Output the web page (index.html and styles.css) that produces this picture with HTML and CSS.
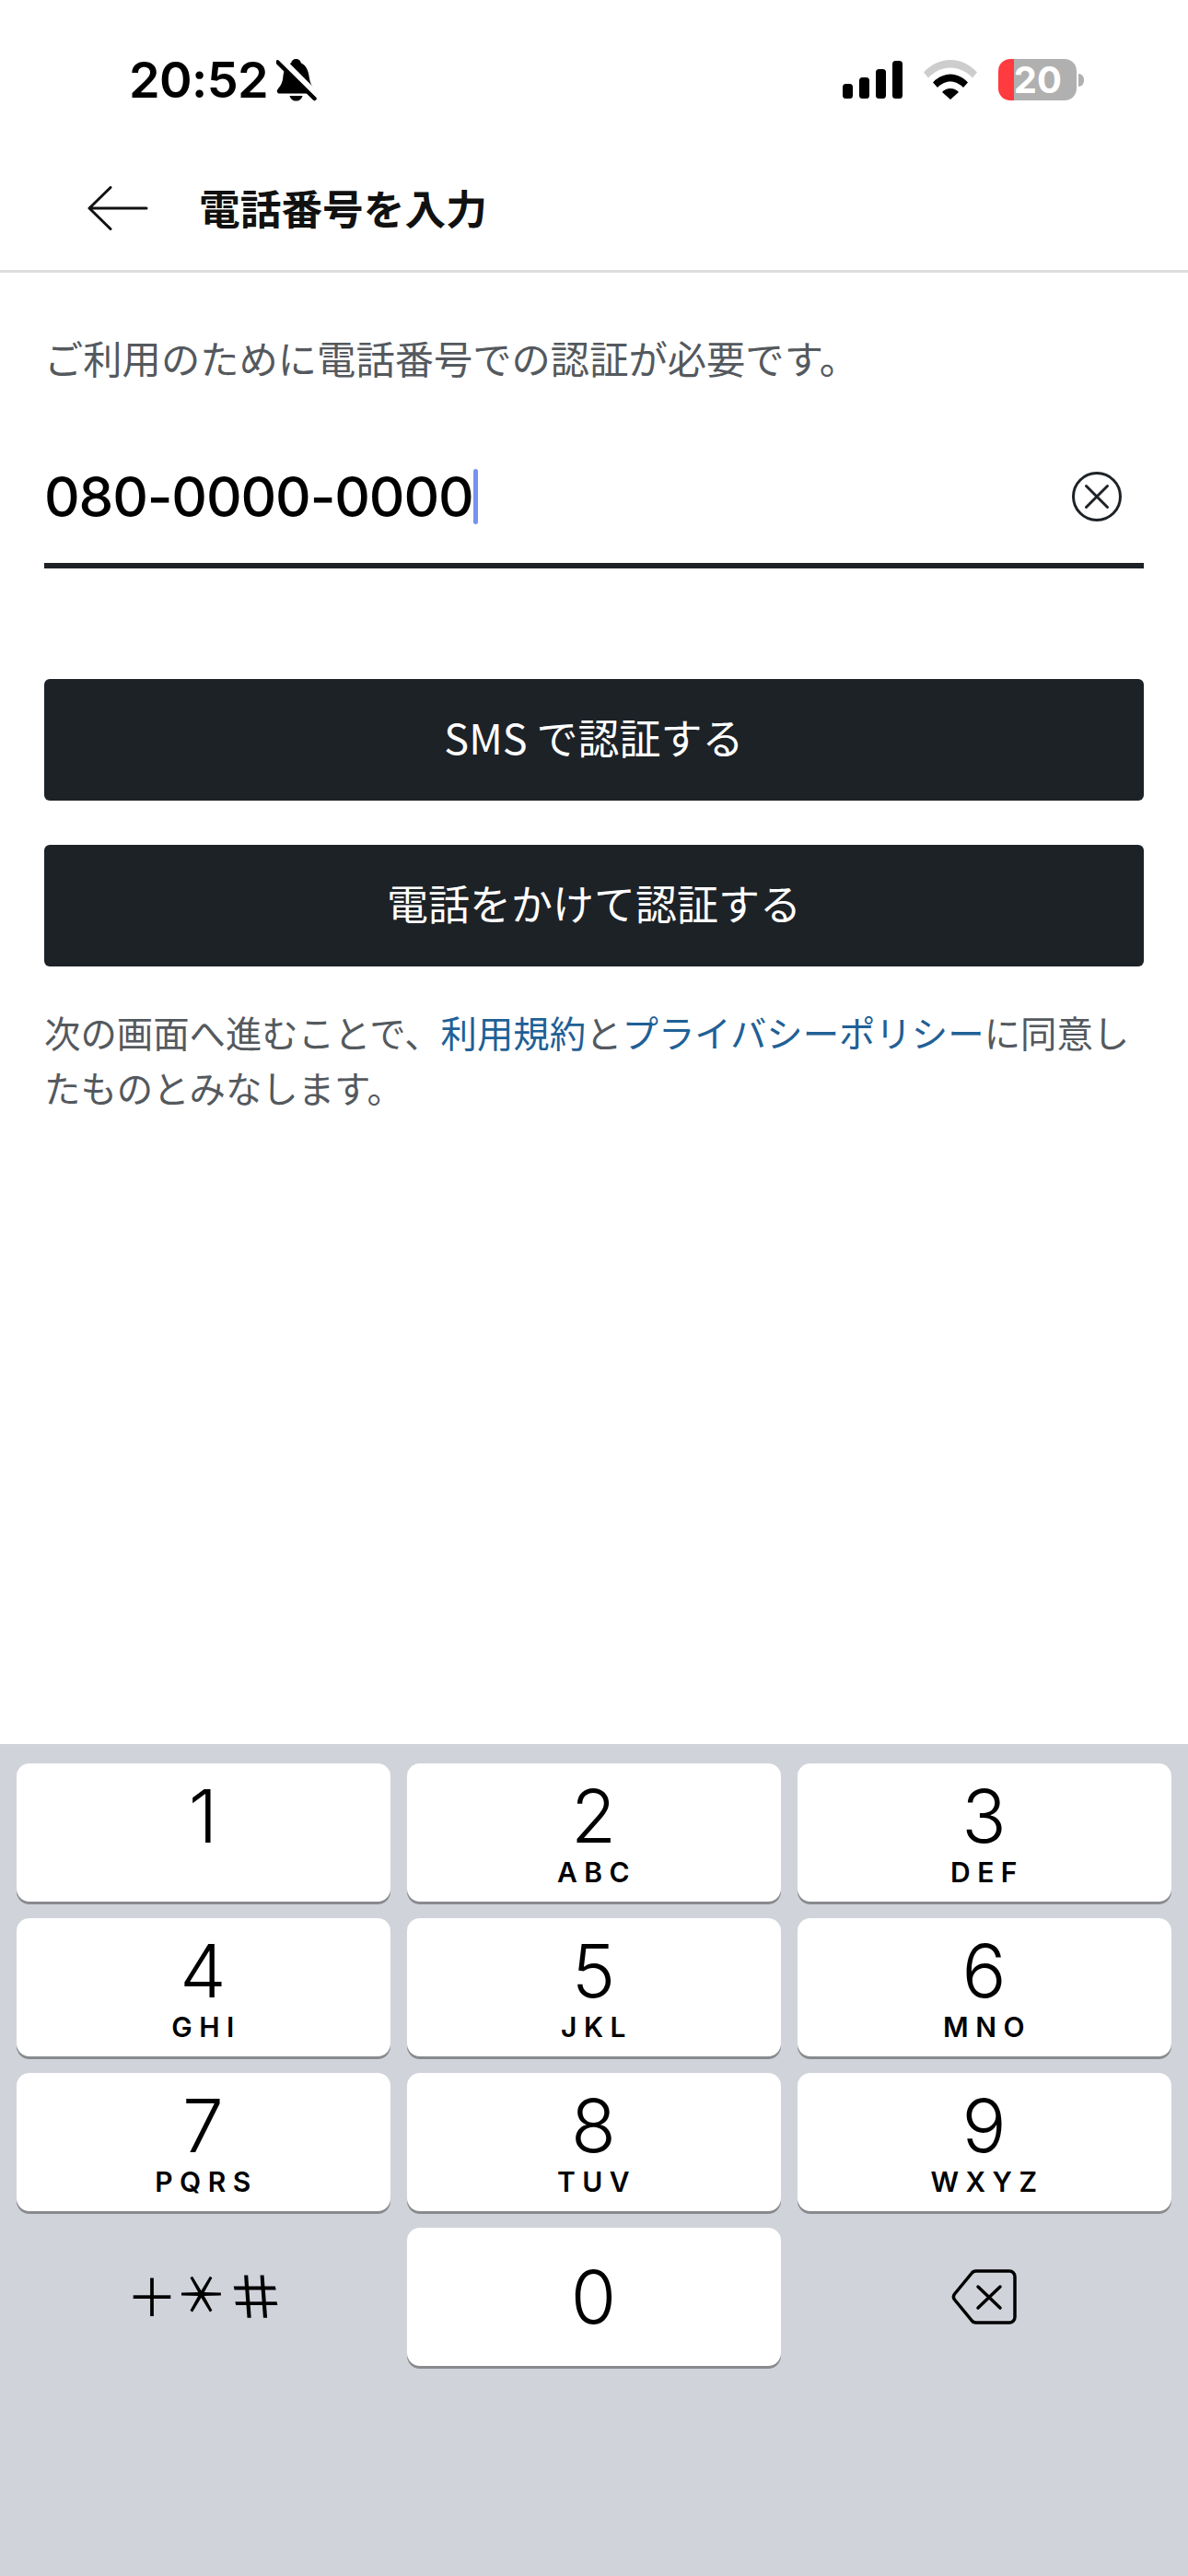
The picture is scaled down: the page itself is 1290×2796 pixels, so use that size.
FILE: index.html
```html
<!DOCTYPE html>
<html lang="ja">
<head>
<meta charset="utf-8">
<title>電話番号を入力</title>
<link rel="stylesheet" href="styles.css">
</head>
<body>
<div class="screen">
  <header class="status">
    <div class="status-left">
      <span class="time">20:52</span>
      <svg class="bell" width="46" height="46" viewBox="0 0 46 46">
        <path d="M21.500 0c-3 0-4.800 1.800-5.300 4.300C10 7 8 13 7.300 20 6.800 26 4 30 1.500 33c-1.500 2-.5 4.500 2 4.500h36c2.500 0 3.500-2.500 2-4.500-2.500-3-5-7-5.700-13C35 13 32.500 7 26.800 4.300 26.300 1.800 24.500 0 21.500 0z" fill="#000"/>
        <path d="M14.500 40h14c-.8 3.500-3.500 5.500-7 5.500s-6.200-2-7-5.500z" fill="#000"/>
        <path d="M3 -1l46 46" stroke="#fff" stroke-width="8"/>
        <path d="M1.500 3.500l40 39.500" stroke="#000" stroke-width="4.500" stroke-linecap="round"/>
      </svg>
    </div>
    <div class="status-right">
      <svg class="signal" width="65" height="41" viewBox="0 0 65 41">
        <rect x="0" y="25" width="11" height="16" rx="3.500"/>
        <rect x="18" y="18" width="11" height="23" rx="3.500"/>
        <rect x="36" y="9" width="11" height="32" rx="3.500"/>
        <rect x="54" y="0" width="11" height="41" rx="3.500"/>
      </svg>
      <svg class="wifi" width="58" height="43" viewBox="0 0 58 43">
        <path d="M0 13.500C8 5 18 0 29 0s21 5 29 13.500l-5 6C46.500 12.500 38 8.500 29 8.500S11.500 12.500 5 19.500z" fill="#cdcdcd"/>
        <path d="M10 24.500C15 19 22 15.500 29 15.500s14 3.500 19 9l-5 5.500c-4-4-9-6.500-14-6.500S19 26 15 30z" fill="#000"/>
        <path d="M20 35c2.500-2.500 5.500-4 9-4s6.500 1.500 9 4l-9 8z" fill="#000"/>
      </svg>
      <div class="battery">
        <div class="battery-body"><span class="battery-text">20</span></div>
        <div class="battery-nub"></div>
      </div>
    </div>
  </header>

  <nav class="nav">
    <svg class="back" width="66" height="48" viewBox="0 0 66 48">
      <path d="M25 1.500L2 24l0 0 23 22.500M2 24h62" fill="none" stroke="#111" stroke-width="3" stroke-linecap="round" stroke-linejoin="round"/>
    </svg>
    <h1 class="title">電話番号を入力</h1>
  </nav>

  <main class="content">
    <p class="lead">ご利用のために電話番号での認証が必要です。</p>
    <div class="field">
      <span class="field-value">080-0000-0000</span><span class="caret"></span>
      <svg class="clear" width="56" height="56" viewBox="0 0 56 56">
        <circle cx="28" cy="28" r="25.500" fill="none" stroke="#1d2227" stroke-width="3"/>
        <path d="M16.500 16.500l23 23M39.500 16.500l-23 23" stroke="#1d2227" stroke-width="3" stroke-linecap="round"/>
      </svg>
    </div>
    <button class="btn btn-first">SMS で認証する</button>
    <button class="btn btn-second">電話をかけて認証する</button>
    <p class="note">次の画面へ進むことで、<a class="link">利用規約</a>と<a class="link">プライバシーポリシー</a>に同意し<br>たものとみなします。</p>
  </main>

  <section class="keyboard">
    <div class="key"><span class="digit">1</span></div>
    <div class="key"><span class="digit">2</span><span class="letters">ABC</span></div>
    <div class="key"><span class="digit">3</span><span class="letters">DEF</span></div>
    <div class="key"><span class="digit">4</span><span class="letters">GHI</span></div>
    <div class="key"><span class="digit">5</span><span class="letters">JKL</span></div>
    <div class="key"><span class="digit">6</span><span class="letters">MNO</span></div>
    <div class="key"><span class="digit">7</span><span class="letters">PQRS</span></div>
    <div class="key"><span class="digit">8</span><span class="letters">TUV</span></div>
    <div class="key"><span class="digit">9</span><span class="letters">WXYZ</span></div>
    <div class="key-plain symbols"><span class="sym">＋</span><span class="sym sym-star">＊</span><span class="sym sym-hash">＃</span></div>
    <div class="key key-zero"><span class="digit">0</span></div>
    <div class="key-plain">
      <svg class="delete" width="72" height="62" viewBox="0 0 72 62">
        <path d="M27 3h36a6 6 0 0 1 6 6v44a6 6 0 0 1-6 6H27a6 6 0 0 1-5-2.500L3.500 34a5 5 0 0 1 0-6L22 5.500A6 6 0 0 1 27 3z" fill="none" stroke="#000" stroke-width="3.500"/>
        <path d="M29 20l24 23M53 20L29 43" stroke="#000" stroke-width="3.500" stroke-linecap="round"/>
      </svg>
    </div>
  </section>
</div>
</body>
</html>
```

FILE: styles.css
```css
* { box-sizing: border-box; }
html, body { margin: 0; padding: 0; background: #fff; }
body { font-family: "Inter", "Noto Sans CJK JP", sans-serif; color: #000; }

.screen { width: 1290px; height: 2796px; display: flex; flex-direction: column; overflow: hidden; }

/* status bar */
.status { height: 161px; padding: 64px 113px 0 140px; display: flex; justify-content: space-between; align-items: flex-start; }
.status-left { display: flex; align-items: flex-start; }
.time { font: 600 54px/46px "Inter", sans-serif; letter-spacing: -0.6px; width: 160px; }
.bell { display: block; }
.status-right { display: flex; align-items: flex-start; }
.signal { display: block; margin-top: 2px; fill: #000; }
.wifi { display: block; margin-left: 23px; margin-top: 1px; }
.battery { display: flex; align-items: center; margin-left: 23px; }
.battery-body { width: 85px; height: 45px; border-radius: 13px; background: linear-gradient(to right, #ff3b40 17px, #b0b0b0 17px); display: flex; align-items: center; justify-content: flex-end; padding-right: 16px; }
.battery-text { font: 700 40px/45px "Inter", sans-serif; color: #fff; }
.battery-nub { width: 6px; height: 14px; margin-left: 2px; background: #b0b0b0; border-radius: 0 6px 6px 0; }

/* nav */
.nav { height: 135px; padding: 0 0 3px 95px; display: flex; align-items: center; border-bottom: 3px solid #ddd; }
.back { display: block; }
.title { margin: 0 0 1px 55px; font: 700 44.700px/60px "Noto Sans CJK JP", sans-serif; color: #111; }

/* content */
.content { padding: 62px 48px 0; }
.lead { margin: 0; font: 400 42.300px/60px "Noto Sans CJK JP", sans-serif; color: #54595e; }
.field { margin-top: 91px; height: 108px; display: flex; align-items: flex-start; border-bottom: 6px solid #1d2227; }
.field-value { font: 500 60px/60px "Inter", sans-serif; letter-spacing: -1.150px; color: #000; }
.caret { width: 5px; height: 60px; background: #7593ee; border-radius: 3px; }
.clear { display: block; margin-left: auto; margin-right: 23px; margin-top: 2px; }
.btn { display: block; width: 100%; height: 132px; border: 0; border-radius: 6px; padding: 0 0 6px; background: #1d2227; color: #fff; font: 400 45px/60px "Noto Sans CJK JP", sans-serif; }
.btn-first { margin-top: 120px; }
.btn-second { margin-top: 48px; }
.note { margin: 41px 0 0; font: 400 39.400px/60px "Noto Sans CJK JP", sans-serif; color: #54595e; }
.link { color: #1f6096; }

/* keyboard */
.keyboard { margin-top: auto; height: 903px; background: #d0d3da; padding: 21px 18px 0; display: grid; grid-template-columns: repeat(3, 1fr); grid-auto-rows: 150px; gap: 18px; align-content: start; }
.key { background: #fff; border-radius: 14px; box-shadow: 0 3px 0 #898a8d; display: flex; flex-direction: column; align-items: center; padding-top: 18px; }
.key-zero { justify-content: center; padding-top: 0; }
.key-plain { display: flex; align-items: center; justify-content: center; }
.digit { font: 300 80px/78px "Inter", sans-serif; margin-right: 1px; color: #000; }
.letters { margin-top: 5px; font: 600 30px/34px "Inter", sans-serif; letter-spacing: 7.500px; margin-right: -6px; color: #000; }
.symbols { padding-bottom: 7px; font: 400 56px/60px "Noto Sans CJK JP", sans-serif; color: #000; }
.sym { display: block; }
.sym-star { transform: rotate(90deg); }
.sym-hash { transform: skewX(12deg) scale(1.25, 1.1); }
.delete { display: block; margin-top: 0; }
```
